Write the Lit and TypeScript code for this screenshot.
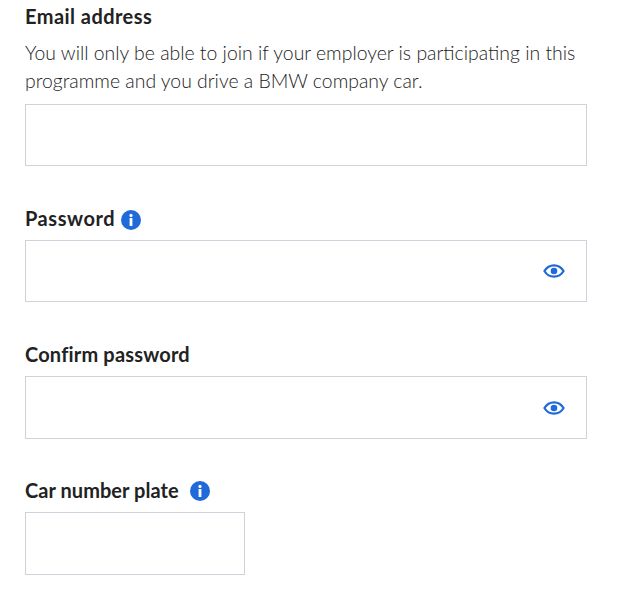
import { LitElement, html, css } from "lit";
import { customElement } from "lit/decorators.js";

const infoIcon = html`<svg class="info" viewBox="0 0 20 20" width="20" height="20" aria-hidden="true">
  <circle cx="10" cy="10" r="10" fill="#1f69d8"></circle>
  <circle cx="10" cy="5.4" r="1.6" fill="#fff"></circle>
  <rect x="8.6" y="8" width="2.8" height="8" rx="0.6" fill="#fff"></rect>
</svg>`;

const eyeIcon = html`<svg class="eye" viewBox="0 0 22 14" width="22" height="14" aria-hidden="true">
  <path d="M1.4 7C3.6 3.4 7 1.3 11 1.3S18.400 3.400 20.600 7C18.400 10.600 15 12.700 11 12.700S3.600 10.600 1.400 7Z" fill="none" stroke="#1f69d8" stroke-width="2.200" stroke-linejoin="round"></path>
  <circle cx="11" cy="7" r="3.300" fill="#1f69d8"></circle>
</svg>`;

@customElement("app-root")
export class AppRoot extends LitElement {
  static styles = css`
    :host {
      display: block;
      width: 640px;
      height: 604px;
      background: #fff;
      box-sizing: border-box;
      padding: 4px 0 0 25px;
      font-family: "Lato", "Open Sans", sans-serif;
      color: #222;
      overflow: hidden;
    }
    .field {
      display: flex;
      flex-direction: column;
      margin-bottom: 38px;
    }
    .field.first-field {
      margin-bottom: 39px;
    }
    .label {
      display: flex;
      align-items: center;
      gap: 6px;
      height: 26px;
      margin-bottom: 9px;
      font-size: 20px;
      letter-spacing: 0.18px;
      font-weight: 700;
    }
    .label.email {
      margin-bottom: 0;
      margin-top: -1px;
      letter-spacing: 0.45px;
    }
    .label.password {
      letter-spacing: 0.55px;
    }
    .label.plate {
      gap: 11px;
      letter-spacing: 0.05px;
    }
    .label .info {
      margin-top: 4px;
    }
    .label.plate .info {
      margin-top: 2px;
    }
    .hint {
      margin: 10px 0 9px;
      font-size: 19.4px;
      line-height: 28px;
      font-weight: 300;
      color: #222;
      width: 562px;
    }
    .box {
      display: flex;
      align-items: center;
      justify-content: flex-end;
      box-sizing: border-box;
      width: 562px;
      height: 62px;
      border: 1px solid #cfd2da;
      padding-right: 21px;
    }
    .box.tall {
      height: 63px;
    }
    .box.short {
      width: 220px;
      height: 63px;
    }
    .info { flex: none; }
    .eye { flex: none; }
  `;

  render() {
    return html`
      <div class="field first-field">
        <div class="label email">Email address</div>
        <p class="hint">You will only be able to join if your employer is participating in this programme and you drive a BMW company car.</p>
        <div class="box"></div>
      </div>
      <div class="field first-field">
        <div class="label password">Password ${infoIcon}</div>
        <div class="box">${eyeIcon}</div>
      </div>
      <div class="field">
        <div class="label">Confirm password</div>
        <div class="box tall">${eyeIcon}</div>
      </div>
      <div class="field">
        <div class="label plate">Car number plate ${infoIcon}</div>
        <div class="box short"></div>
      </div>
    `;
  }
}
